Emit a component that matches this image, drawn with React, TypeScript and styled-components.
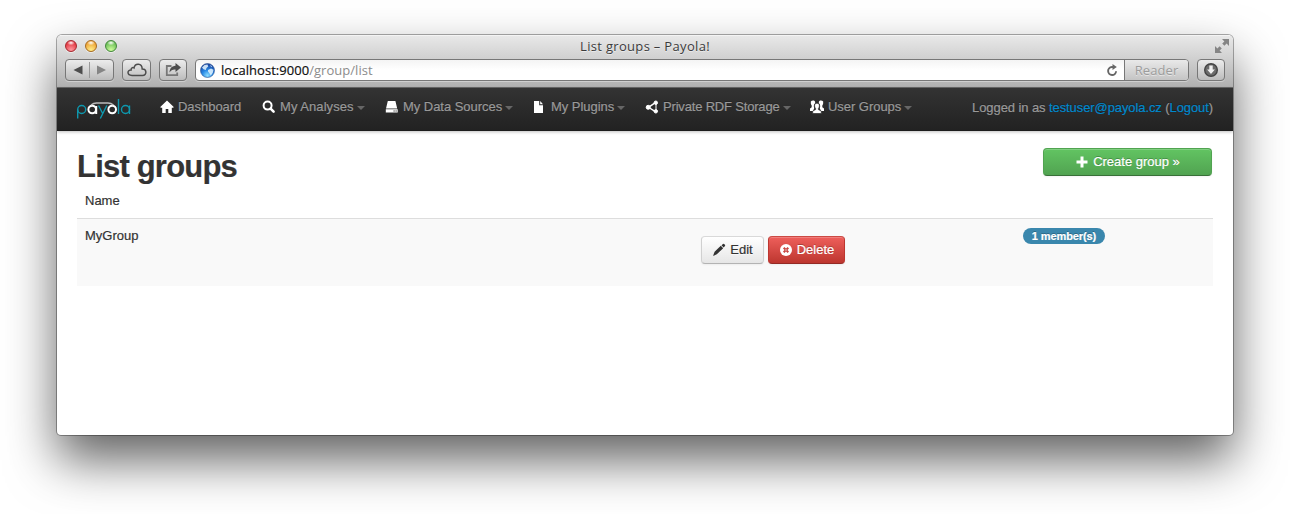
import React from 'react';
import styled, { createGlobalStyle } from 'styled-components';

const GlobalStyle = createGlobalStyle`
  body { margin: 0; background: #fff; overflow: hidden; }
  * { box-sizing: border-box; }
`;

const Desktop = styled.div`
  height: 514px;
  padding: 35px 57px 0;
`;

const BrowserWindow = styled.div`
  height: 400px;
  border-radius: 5px 5px 4px 4px;
  background: #fff;
  overflow: hidden;
  box-shadow: 0 0 0 1px rgba(0, 0, 0, 0.32), 0 25px 50px rgba(0, 0, 0, 0.62);
  font: 13px/18px 'Liberation Sans', Helvetica, Arial, sans-serif;
  -webkit-text-stroke: 0.2px;
  color: #333;
`;

const Chrome = styled.header`
  height: 53px;
  background: linear-gradient(#e8e8e8, #cdcdcd 50%, #b0b0b0);
  border-top: 1px solid #f4f4f4;
  border-bottom: 1px solid #686868;
`;

const TitleBar = styled.div`
  height: 22px;
  padding: 0 4px 0 8px;
  display: grid;
  grid-template-columns: 56px 1fr 60px;
  align-items: center;
`;

const Lights = styled.div`
  display: flex;
  gap: 8px;
  margin-top: -2px;
`;

const Light = styled.i<{ $edge: string; $mid: string; $glow: string }>`
  width: 12px;
  height: 12px;
  border-radius: 50%;
  border: 1px solid ${p => p.$edge};
  background: radial-gradient(ellipse 4px 2.5px at 50% 18%, #fff, transparent),
    radial-gradient(circle at 50% 90%, ${p => p.$glow}, ${p => p.$mid} 75%);
  box-shadow: 0 1px 0 rgba(255, 255, 255, 0.5);
`;

const WindowTitle = styled.div`
  text-align: center;
  margin-top: -2px;
  font: 13px/20px 'Open Sans', 'Lucida Grande', sans-serif;
  letter-spacing: 0.32px;
  -webkit-text-stroke: 0;
  color: #3b3b3b;
  text-shadow: 0 1px 0 rgba(255, 255, 255, 0.5);
`;

const FullscreenSlot = styled.div`
  display: flex;
  justify-content: flex-end;
  margin-top: -2px;
`;

const ToolBar = styled.div`
  display: flex;
  height: 24px;
  padding: 1px 8px 0;
`;

const ToolButton = styled.div<{ $width: number; $gap?: number }>`
  width: ${p => p.$width}px;
  height: 22px;
  margin-right: ${p => p.$gap ?? 0}px;
  border: 1px solid #777;
  border-radius: 4px;
  background: linear-gradient(#ececec, #bcbcbc);
  box-shadow: 0 1px 0 rgba(255, 255, 255, 0.35);
  display: flex;
  align-items: center;
  justify-content: center;
`;

const AddressBar = styled.div`
  flex: 1;
  height: 22px;
  border: 1px solid #777;
  border-radius: 4px;
  background: linear-gradient(#f4f4f4, #fff 50%);
  box-shadow: 0 1px 0 rgba(255, 255, 255, 0.35);
  margin-right: 8px;
  display: flex;
  align-items: center;
  padding-left: 4px;
  overflow: hidden;
`;

const Url = styled.span`
  flex: 1;
  margin-left: 6px;
  font: 13px/20px 'Open Sans', 'Lucida Grande', sans-serif;
  letter-spacing: 0.04px;
  color: #111;
  span { color: #8c8c8c; -webkit-text-stroke: 0; }
`;

const Reader = styled.span`
  width: 64px;
  height: 20px;
  margin-left: 6px;
  border-left: 1px solid #777;
  background: linear-gradient(#e9e9e9, #c4c4c4);
  text-align: center;
  font: 13px/20px 'Open Sans', 'Lucida Grande', sans-serif;
  letter-spacing: 0.1px;
  -webkit-text-stroke: 0;
  color: #9c9c9c;
  text-shadow: 0 1px 0 rgba(255, 255, 255, 0.5);
`;

const NavBar = styled.nav`
  height: 43px;
  padding: 0 20px;
  display: flex;
  background: linear-gradient(#333, #222);
  border-bottom: 1px solid #1c1c1c;
  box-shadow: 0 1px 3px rgba(0, 0, 0, 0.25);
  color: #999;
  text-shadow: 0 -1px 0 rgba(0, 0, 0, 0.25);
`;

const Logo = styled.svg`
  width: 56px;
  height: 26px;
  margin: 8px 28px 0 -1px;
  flex: none;
`;

const NavItem = styled.a<{ $width: number; $tracking?: number }>`
  width: ${p => p.$width}px;
  height: 38px;
  flex: none;
  display: flex;
  align-items: center;
  white-space: nowrap;
  letter-spacing: ${p => p.$tracking ?? -0.04}px;
  svg { width: 14px; height: 14px; margin-right: 4px; flex: none; }
`;

const Caret = styled.i`
  margin: 1px 0 0 3px;
  border: solid transparent;
  border-width: 4px 4px 0;
  border-top-color: #666;
`;

const Account = styled.div`
  margin-left: auto;
  line-height: 40px;
  white-space: nowrap;
  letter-spacing: -0.09px;
  a { color: #0088cc; }
`;

const Page = styled.main`
  padding: 17px 20px 0;
`;

const PageHead = styled.div`
  display: flex;
  justify-content: space-between;
  height: 45px;
  padding-right: 1px;
`;

const Heading = styled.h1`
  margin: 0;
  font-size: 31px;
  line-height: 37px;
  font-weight: bold;
  letter-spacing: -0.8px;
`;

const buttonTones = {
  green: 'color:#fff;background:linear-gradient(#62c462,#51a351);border-color:#51a351 #51a351 #387038;text-shadow:0 -1px 0 rgba(0,0,0,.25);',
  red: 'color:#fff;background:linear-gradient(#ee5f5b,#bd362f);border-color:#cb4a44 #bd362f #942a25;text-shadow:0 -1px 0 rgba(0,0,0,.25);',
  plain: 'color:#333;background:linear-gradient(#fff,#e6e6e6);border-color:#d9d9d9 #d0d0d0 #b3b3b3;text-shadow:0 1px 1px rgba(255,255,255,.75);',
};

const Button = styled.a<{ $tone: keyof typeof buttonTones; $width: number }>`
  width: ${p => p.$width}px;
  height: 28px;
  border: 1px solid;
  border-radius: 4px;
  display: flex;
  align-items: center;
  justify-content: center;
  white-space: nowrap;
  box-shadow: inset 0 1px 0 rgba(255, 255, 255, 0.2), 0 1px 2px rgba(0, 0, 0, 0.05);
  ${p => buttonTones[p.$tone]}
  svg { width: 14px; height: 14px; margin-right: 4px; flex: none; }
`;

const Table = styled.div`
  display: grid;
  grid-template-columns: 624px 322px 1fr;
`;

const HeadCell = styled.div`
  grid-column: 1 / -1;
  height: 25px;
  padding: 0 8px;
  line-height: 15px;
`;

const Cell = styled.div`
  height: 68px;
  padding: 8px 0 0 8px;
  background: #f9f9f9;
  border-top: 1px solid #ddd;
`;

const ActionCell = styled(Cell)`
  padding: 17px 0 0;
  display: flex;
  gap: 4px;
`;

const BadgeCell = styled(Cell)`
  padding: 9px 0 0;
`;

const Badge = styled.span`
  display: block;
  width: 82px;
  height: 16px;
  border-radius: 8px;
  background: #3a87ad;
  color: #fff;
  text-align: center;
  font-size: 11px;
  font-weight: bold;
  line-height: 16px;
  letter-spacing: -0.1px;
  text-shadow: 0 -1px 0 rgba(0, 0, 0, 0.25);
`;

const HomeIcon = () => (
  <svg viewBox="0 0 14 14" fill="#fff"><path d="M7 .6.5 6.800v.9H2.200V13h3.500V9h2.600v4h3.500V7.700h1.700v-.9z" /></svg>
);
const SearchIcon = () => (
  <svg viewBox="0 0 14 14" fill="none" stroke="#fff"><circle cx="5.600" cy="5.600" r="4" strokeWidth="2" /><path d="m8.600 8.600 3 3" strokeWidth="2.600" strokeLinecap="round" /></svg>
);
const DriveIcon = () => (
  <svg viewBox="0 0 14 14" fill="#fff"><path d="M2.800 1h7.600l1.800 7.600H1zM.8 9.200h11.900V12.500H.8z" /><path d="M8.500 10.500h1.200v1H8.500zM10.500 10.500h1.200v1h-1.200z" fill="#222" /></svg>
);
const FileIcon = () => (
  <svg viewBox="0 0 14 14" fill="#fff"><path d="M1 1h5.200v4.300H10V13H1z" /><path d="M7.200 1 10 4.300H7.200z" /></svg>
);
const ShareIcon = () => (
  <svg viewBox="0 0 14 14" fill="#fff" stroke="#fff"><path d="M10 2.800 3.500 7.300l6.500 4" fill="none" strokeWidth="1.400" /><path d="M11 3v8" strokeWidth="1" /><circle cx="10.800" cy="2.700" r="1.700" /><circle cx="3.200" cy="7.300" r="2" /><circle cx="10.800" cy="11.300" r="1.700" /></svg>
);
const UsersIcon = () => (
  <svg viewBox="0 0 14 14" fill="#fff"><path d="M.8 1.500Q2 .2 4 .6q1.500.6 1.200 2.400Q3.500 4 3.800 6.500L4.300 8 3 11H0V8.500l1.700-1.200V5.500Q.5 3.500.8 1.500zM13.200 1.500Q12 .2 10 .6 8.500 1.200 8.800 3q1.700 1 1.400 3.500L9.700 8 11 11h3V8.500l-1.700-1.200V5.500q1.200-2 .9-4z" /><path d="M7 3.200c1.800 0 2.600 1.100 2.400 2.900-.1 1-.4 1.800-1 2.300v1.200l2.900 1.400V13.500H2.700V11l2.900-1.400V8.400c-.6-.5-.9-1.300-1-2.300C4.400 4.300 5.200 3.200 7 3.200z" stroke="#2b2b2b" strokeWidth=".7" /></svg>
);
const PlusIcon = () => (
  <svg viewBox="0 0 14 14" fill="#fff"><path d="M5.500 1.500h3v4h4v3h-4v4h-3v-4h-4v-3h4z" /></svg>
);
const PencilIcon = () => (
  <svg viewBox="0 0 14 14" fill="#333"><path d="M9.500 2.300 11 1q.7-.5 1.400.2l.500.500q.6.600.1 1.300l-1.400 1.500zM8.800 2.800l2.400 2.400L4.800 11.300 1 13l1.600-4.200z" /></svg>
);
const RemoveIcon = () => (
  <svg viewBox="0 0 14 14"><circle cx="7" cy="7" r="6" fill="#fff" /><path d="m4.700 4.700 4.600 4.600m0-4.600L4.700 9.300" stroke="#c94540" strokeWidth="2" /><circle cx="7" cy="7" r=".9" fill="#fff" opacity=".5" /></svg>
);
const CloudIcon = () => (
  <svg width="20" height="14" viewBox="0 0 20 14" fill="none" stroke="#4d4d4d" strokeWidth="1.500"><path d="M5 12.500C-.4 12.300.1 6.700 4.100 7 3.900 4.900 5.800 4 7 4.900 8-.1 15-.2 15.200 5.900c4.700-.2 5 6.500.3 6.600z" /></svg>
);
const ExportIcon = () => (
  <svg width="17" height="14" viewBox="0 0 17 14"><path d="M6.500 3H1.800v9.200h10.400V9.500" fill="none" stroke="#777" strokeWidth="1.800" /><path d="M10.500 0 16 4.600l-5.500 4.500V6.500C7.500 6.300 6 7.300 4.500 9.500 4.700 5.800 6.500 3 10.500 2.700z" fill="#4d4d4d" /></svg>
);
const BackForward = () => (
  <svg width="47" height="20" viewBox="0 0 47 20"><path d="M16.500 5.500v9l-9-4.500z" fill="#4d4d4d" /><path d="M31 5.500v9l9-4.500z" fill="#858585" /><path d="M23.500 2v16" stroke="#999" /></svg>
);
const GlobeIcon = () => (
  <svg width="15" height="15" viewBox="0 0 15 15">
    <defs>
      <radialGradient id="sea" cx=".5" cy=".85" r=".85"><stop stopColor="#8bdcff" /><stop offset=".45" stopColor="#2889e5" /><stop offset="1" stopColor="#173b97" /></radialGradient>
    </defs>
    <circle cx="7.500" cy="7.500" r="7" fill="url(#sea)" stroke="#2a5290" strokeWidth=".6" />
    <path d="M2 4.500 4.500 2l3-.5.7 2L6.500 5 5.800 7 3.500 6.200zM8 7l3-1.500 2.500 1.300-.7 3-2 2.700-1.700-2.700L8 8.500zM10 2l2 1.200-.8 1z" fill="#e5f6ff" opacity=".85" />
  </svg>
);
const ReloadIcon = () => (
  <svg width="12" height="13" viewBox="0 0 12 13"><path d="M7 3H5.800a4 4 0 1 0 4.300 4.300" fill="none" stroke="#666" strokeWidth="1.900" /><path d="M6.500 0v6l4.300-3z" fill="#666" /></svg>
);
const DownloadIcon = () => (
  <svg width="16" height="16" viewBox="0 0 16 16"><circle cx="8" cy="8" r="6.300" fill="#6b6b6b" stroke="#444" strokeWidth="1.400" /><path d="M6.300 3.500h3.400v4h2.200L8 12 4.100 7.500h2.200z" fill="#f0f0f0" /></svg>
);
const FullscreenIcon = () => (
  <svg width="14" height="14" viewBox="0 0 14 14" fill="#858585"><path d="M7 0h7v7l-2.400-2.400-2.200 2.200-2.200-2.200 2.200-2.200zM0 7v7h7l-2.400-2.400 2.200-2.200-2.200-2.200-2.200 2.200z" /></svg>
);

const PayolaLogo = () => (
  <Logo viewBox="0 0 56 26" fill="none">
    <g stroke="#0e98ae" strokeWidth="1.400">
      <path d="M1.700 22.500V13.500" /><circle cx="5.700" cy="13.500" r="4" />
      <path d="M22.500 9.500l4.200 8M30.800 9.500l-6.500 13" />
      <path d="M42.500 3v15" /><circle cx="49.500" cy="13.500" r="4" /><path d="M53.500 9.500v8.500" />
    </g>
    <g stroke="#fff" strokeWidth="2">
      <circle cx="16.200" cy="13.500" r="3.800" /><path d="M20.200 10v8" /><circle cx="36.200" cy="13.500" r="3.800" />
    </g>
    <path d="M15 9q2.500-2 5.500-2h11.500q3 0 5.500 2" stroke="#bbb" strokeWidth="1.600" />
  </Logo>
);

export default function App() {
  return (
    <>
      <GlobalStyle />
      <Desktop>
        <BrowserWindow>
          <Chrome>
            <TitleBar>
              <Lights>
                <Light $edge="#a5272d" $mid="#e2353f" $glow="#ff9aa0" />
                <Light $edge="#a66a1e" $mid="#eda133" $glow="#ffef8a" />
                <Light $edge="#43873b" $mid="#68bc55" $glow="#d0ff9e" />
              </Lights>
              <WindowTitle>List groups – Payola!</WindowTitle>
              <FullscreenSlot><FullscreenIcon /></FullscreenSlot>
            </TitleBar>
            <ToolBar>
              <ToolButton $width={49} $gap={8}><BackForward /></ToolButton>
              <ToolButton $width={29} $gap={8}><CloudIcon /></ToolButton>
              <ToolButton $width={28} $gap={8}><ExportIcon /></ToolButton>
              <AddressBar>
                <GlobeIcon />
                <Url>localhost:9000<span>/group/list</span></Url>
                <ReloadIcon />
                <Reader>Reader</Reader>
              </AddressBar>
              <ToolButton $width={28}><DownloadIcon /></ToolButton>
            </ToolBar>
          </Chrome>
          <NavBar>
            <PayolaLogo />
            <NavItem $width={102}><HomeIcon />Dashboard</NavItem>
            <NavItem $width={123} $tracking={0.05}><SearchIcon />My Analyses<Caret /></NavItem>
            <NavItem $width={148}><DriveIcon />My Data Sources<Caret /></NavItem>
            <NavItem $width={112}><FileIcon />My Plugins<Caret /></NavItem>
            <NavItem $width={165} $tracking={-0.18}><ShareIcon />Private RDF Storage<Caret /></NavItem>
            <NavItem $width={110}><UsersIcon />User Groups<Caret /></NavItem>
            <Account>Logged in as <a>testuser@payola.cz</a> (<a>Logout</a>)</Account>
          </NavBar>
          <Page>
            <PageHead>
              <Heading>List groups</Heading>
              <Button $tone="green" $width={169}><PlusIcon />Create group »</Button>
            </PageHead>
            <Table>
              <HeadCell>Name</HeadCell>
              <Cell>MyGroup</Cell>
              <ActionCell>
                <Button $tone="plain" $width={63}><PencilIcon />Edit</Button>
                <Button $tone="red" $width={77}><RemoveIcon />Delete</Button>
              </ActionCell>
              <BadgeCell><Badge>1 member(s)</Badge></BadgeCell>
            </Table>
          </Page>
        </BrowserWindow>
      </Desktop>
    </>
  );
}
